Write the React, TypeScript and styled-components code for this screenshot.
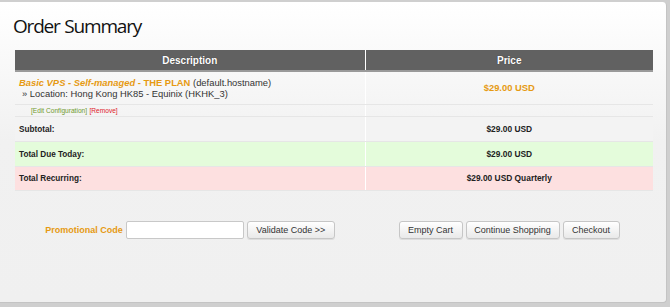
import React from "react";
import styled, { createGlobalStyle } from "styled-components";

const GlobalStyle = createGlobalStyle`
  html, body {
    margin: 0;
    padding: 0;
    background: #cfcfcf;
  }
  body {
    width: 670px;
    height: 307px;
    overflow: hidden;
    font-family: "Liberation Sans", Arial, sans-serif;
  }
`;

const Panel = styled.div`
  margin-top: 2px;
  width: 667px;
  height: 301px;
  box-sizing: border-box;
  border-right: 1px solid #c4c4c4;
  border-bottom: 1px solid #c4c4c4;
  border-radius: 0 4px 4px 0;
  background: linear-gradient(to bottom, #ffffff 0px, #f9f9f9 60px, #f1f1f1 140px, #f0f0f0 100%);
  padding: 12px 14px 0 15px;
`;

const Title = styled.h1`
  margin: 0 0 11px -2px;
  font-family: "Open Sans", sans-serif;
  font-weight: 400;
  font-size: 19px;
  letter-spacing: -1.2px;
  word-spacing: 1px;
  line-height: 25px;
  color: #111;
`;

const Table = styled.table`
  width: 638px;
  border-collapse: collapse;
  table-layout: fixed;
`;

const HeadCell = styled.th<{ $first?: boolean }>`
  height: 20px;
  padding: 0;
  background: #616161;
  border-bottom: 2px solid #9a9a9a;
  border-left: ${(p) => (p.$first ? "none" : "1px solid #fff")};
  color: #fff;
  font-size: 10px;
  font-weight: bold;
  text-shadow: 0 0 1px #333;
  text-align: center;
`;

type Tone = "plain" | "sub" | "green" | "pink";

const tones: Record<Tone, string> = {
  plain: "transparent",
  sub: "#f3f3f3",
  green: "#e4fcdb",
  pink: "#fde0e0",
};

const Cell = styled.td<{ $tone?: Tone; $right?: boolean; $h?: number }>`
  height: ${(p) => p.$h ?? 24}px;
  padding: 0 4px;
  box-sizing: border-box;
  background: ${(p) => tones[p.$tone ?? "plain"]};
  border-bottom: 1px solid #e6e6e6;
  border-left: ${(p) => (p.$right ? "1px solid #fff" : "none")};
  text-align: ${(p) => (p.$right ? "center" : "left")};
  font-size: 8.5px;
  color: #222;
  vertical-align: middle;
`;

const Label = styled.span`
  font-weight: bold;
  font-size: 8.2px;
  color: #222;
`;

const Amount = styled.span<{ $big?: boolean }>`
  font-weight: bold;
  font-size: ${(p) => (p.$big ? "9.4px" : "8.4px")};
  color: ${(p) => (p.$big ? "#e69a12" : "#222")};
`;

const Product = styled.div`
  font-size: 9.4px;
  line-height: 11px;
  color: #333;
`;

const ProductName = styled.span`
  color: #e69a12;
  font-weight: bold;
`;

const Italic = styled.em`
  font-style: italic;
`;

const Location = styled.div`
  padding-left: 3px;
  font-size: 9.4px;
  line-height: 11px;
  color: #333;
`;

const SmallLink = styled.a<{ $red?: boolean }>`
  font-size: 6.6px;
  color: ${(p) => (p.$red ? "#e0202a" : "#6f9a2e")};
  text-decoration: none;
`;

const LinksRow = styled.div`
  padding-left: 12px;
  line-height: 10px;
`;

const Actions = styled.div`
  display: grid;
  grid-template-columns: 350px 288px;
  margin-top: 30px;
`;

const Group = styled.div`
  display: flex;
  align-items: center;
  justify-content: center;
  gap: 3px;
`;

const PromoLabel = styled.label`
  font-size: 9px;
  font-weight: bold;
  color: #e69a12;
`;

const Input = styled.input`
  width: 118px;
  height: 18px;
  box-sizing: border-box;
  border: 1px solid #c8c8c8;
  border-radius: 2px;
  background: #fff;
  margin: 0;
`;

const Button = styled.button<{ $w: number }>`
  width: ${(p) => p.$w}px;
  height: 18px;
  padding: 0;
  box-sizing: border-box;
  border: 1px solid #c6c6c6;
  border-radius: 3px;
  background: linear-gradient(to bottom, #ffffff, #e9e9e9);
  font-family: "Liberation Sans", Arial, sans-serif;
  font-size: 9px;
  color: #333;
  box-shadow: 0 1px 0 #ddd;
`;

const App: React.FC = () => {
  return (
    <>
      <GlobalStyle />
      <Panel>
        <Title>Order Summary</Title>
        <Table>
          <colgroup>
            <col style={{ width: 350 }} />
            <col style={{ width: 288 }} />
          </colgroup>
          <thead>
            <tr>
              <HeadCell $first>Description</HeadCell>
              <HeadCell>Price</HeadCell>
            </tr>
          </thead>
          <tbody>
            <tr>
              <Cell $h={33}>
                <Product>
                  <ProductName>
                    <Italic>Basic VPS - Self-managed</Italic> - THE PLAN
                  </ProductName>{" "}
                  (default.hostname)
                </Product>
                <Location>» Location: Hong Kong HK85 - Equinix (HKHK_3)</Location>
              </Cell>
              <Cell $right $h={33}>
                <Amount $big>$29.00 USD</Amount>
              </Cell>
            </tr>
            <tr>
              <Cell $h={12}>
                <LinksRow>
                  <SmallLink href="#">[Edit Configuration]</SmallLink>{" "}
                  <SmallLink href="#" $red>
                    [Remove]
                  </SmallLink>
                </LinksRow>
              </Cell>
              <Cell $right $h={12} />
            </tr>
            <tr>
              <Cell $tone="sub" $h={25}>
                <Label>Subtotal:</Label>
              </Cell>
              <Cell $tone="sub" $right $h={25}>
                <Amount>$29.00 USD</Amount>
              </Cell>
            </tr>
            <tr>
              <Cell $tone="green" $h={25}>
                <Label>Total Due Today:</Label>
              </Cell>
              <Cell $tone="green" $right $h={25}>
                <Amount>$29.00 USD</Amount>
              </Cell>
            </tr>
            <tr>
              <Cell $tone="pink" $h={24}>
                <Label>Total Recurring:</Label>
              </Cell>
              <Cell $tone="pink" $right $h={24}>
                <Amount>$29.00 USD Quarterly</Amount>
              </Cell>
            </tr>
          </tbody>
        </Table>
        <Actions>
          <Group>
            <PromoLabel htmlFor="promo">Promotional Code</PromoLabel>
            <Input id="promo" type="text" />
            <Button $w={88}>Validate Code &gt;&gt;</Button>
          </Group>
          <Group>
            <Button $w={64}>Empty Cart</Button>
            <Button $w={94}>Continue Shopping</Button>
            <Button $w={57}>Checkout</Button>
          </Group>
        </Actions>
      </Panel>
    </>
  );
};

export default App;
